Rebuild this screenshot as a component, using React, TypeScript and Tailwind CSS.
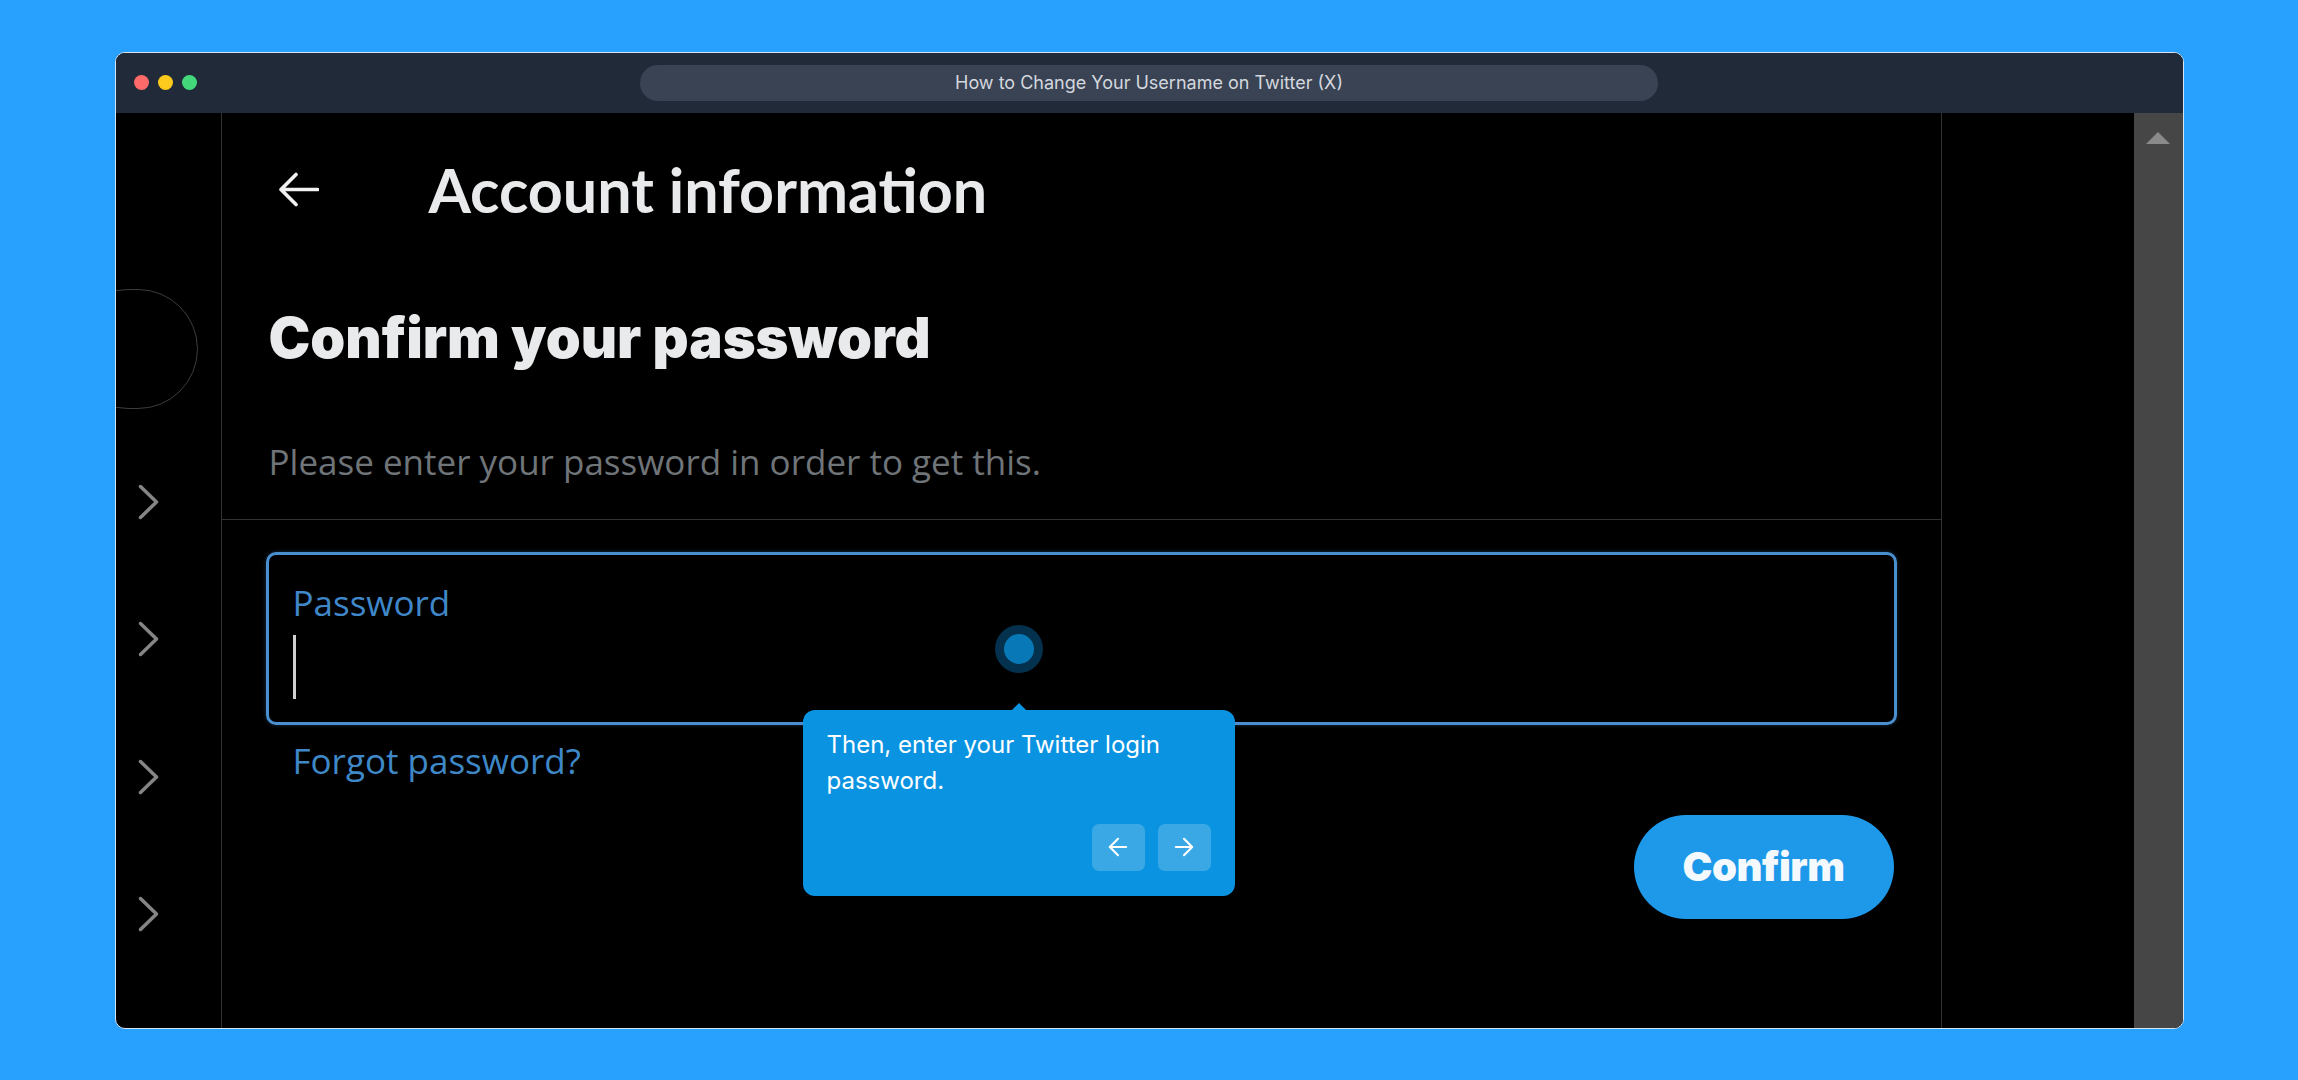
import { ArrowLeft, ArrowRight } from 'lucide-react'

function Chevron() {
  return (
    <svg width="21" height="36" viewBox="0 0 21 36" fill="none">
      <polyline points="2.5,2.5 18.5,18 2.5,33.5" stroke="#858585" strokeWidth="3.5" strokeLinecap="round" strokeLinejoin="round" />
    </svg>
  )
}

function BackArrow() {
  return (
    <svg width="41" height="35" viewBox="0 0 41 35" fill="none">
      <path d="M3.5 17.5H39.5M18 2.5L3 17.5L18 32.5" stroke="#f2f2f2" strokeWidth="3.6" strokeLinecap="round" strokeLinejoin="round" />
    </svg>
  )
}

export default function App() {
  return (
    <div className="flex h-screen w-full items-center justify-center bg-[#28a1fe] font-['Inter',sans-serif]">
      <div className="flex h-[977px] w-[2069px] flex-col overflow-hidden rounded-[10px] border border-[#d6e4f0] bg-black">
        {/* title bar */}
        <div className="grid h-[60px] shrink-0 grid-cols-[1fr_1018px_1fr] items-center bg-[#212a39]">
          <div className="flex items-center gap-[9px] pl-[18px]">
            <span className="h-[15px] w-[15px] rounded-full bg-[#fe6a6a]" />
            <span className="h-[15px] w-[15px] rounded-full bg-[#fcca1c]" />
            <span className="h-[15px] w-[15px] rounded-full bg-[#43d97b]" />
          </div>
          <div className="flex h-[36px] items-center justify-center rounded-full bg-[#394354] text-[18px] text-[#d4d8de]">
            How to Change Your Username on Twitter (X)
          </div>
          <div />
        </div>

        <div className="flex min-h-0 flex-1">
          {/* left nav */}
          <aside className="flex w-[106px] shrink-0 flex-col overflow-hidden border-r border-[#2f3336]">
            <div className="-ml-[48px] mt-[176px] h-[120px] w-[130px] shrink-0 rounded-full border border-[#3a3d40]" />
            <div className="mt-[75px] flex flex-col gap-[101.5px] pl-[22px]">
              <Chevron />
              <Chevron />
              <Chevron />
              <Chevron />
            </div>
          </aside>

          {/* main column */}
          <main className="relative flex w-[1720px] shrink-0 flex-col border-r border-[#2f3336]">
            <div className="flex h-[154px] shrink-0 items-center pl-[56px]">
              <BackArrow />
              <h1 className="ml-[110px] font-['Lato',sans-serif] text-[61px] font-bold leading-none text-[#e9eaeb]">
                Account information
              </h1>
            </div>

            <h2 className="mt-[43px] pl-[47px] text-[56px] font-black leading-none tracking-[0px] text-[#e9eaeb]">
              Confirm your password
            </h2>
            <p className="mt-[78px] pl-[47px] font-['Open_Sans',sans-serif] text-[35px] leading-none text-[#6f7478]">
              Please enter your password in order to get this.
            </p>

            <div className="mt-[40px] h-px bg-[#2f3336]" />

            <div className="mx-[44px] mt-[32px] flex h-[173px] flex-col rounded-[10px] border-[3px] border-[#4a8fd0] pl-[24px] pt-[30px] shadow-[0_0_4px_rgba(74,143,208,0.35)]">
              <span className="font-['Open_Sans',sans-serif] text-[35px] leading-none text-[#3f87c8]">Password</span>
              <span className="mt-[15px] h-[64px] w-[3px] bg-[#d0d0d0]" />
            </div>

            <a className="ml-[71px] mt-[18px] font-['Open_Sans',sans-serif] text-[35px] leading-none text-[#3f88c8]">
              Forgot password?
            </a>

            <button className="mr-[47px] mt-[37px] flex h-[104px] w-[260px] items-center justify-center self-end rounded-full bg-[#1e99ea] text-[40px] font-black tracking-[-0.5px] text-[#f4f9fd]">
              Confirm
            </button>

            {/* hotspot */}
            <div className="absolute left-[773px] top-[512px] flex h-[48px] w-[48px] items-center justify-center rounded-full bg-[#04314d]">
              <div className="h-[30px] w-[30px] rounded-full bg-[#0878b6]" />
            </div>

            {/* tour tooltip */}
            <div className="absolute left-[581px] top-[597px] flex w-[432px] flex-col rounded-[12px] bg-[#0a93e0] px-[24px] pb-[25px] pt-[17px]">
              <div className="absolute -top-[5px] left-1/2 h-[10px] w-[10px] -translate-x-1/2 rotate-45 bg-[#0a93e0]" />
              <p className="text-[24px] leading-[36px] text-white">Then, enter your Twitter login password.</p>
              <div className="mt-[25px] flex justify-end gap-[13px]">
                <button className="flex h-[47px] w-[53px] items-center justify-center rounded-[7px] bg-white/20 text-white">
                  <ArrowLeft size={28} strokeWidth={1.8} />
                </button>
                <button className="flex h-[47px] w-[53px] items-center justify-center rounded-[7px] bg-white/20 text-white">
                  <ArrowRight size={28} strokeWidth={1.8} />
                </button>
              </div>
            </div>
          </main>

          <div className="flex-1" />

          {/* scrollbar */}
          <div className="flex w-[49px] shrink-0 justify-center bg-[#464646]">
            <div className="mt-[19px] h-0 w-0 border-x-[12px] border-b-[12px] border-x-transparent border-b-[#8a8a8a]" />
          </div>
        </div>
      </div>
    </div>
  )
}
